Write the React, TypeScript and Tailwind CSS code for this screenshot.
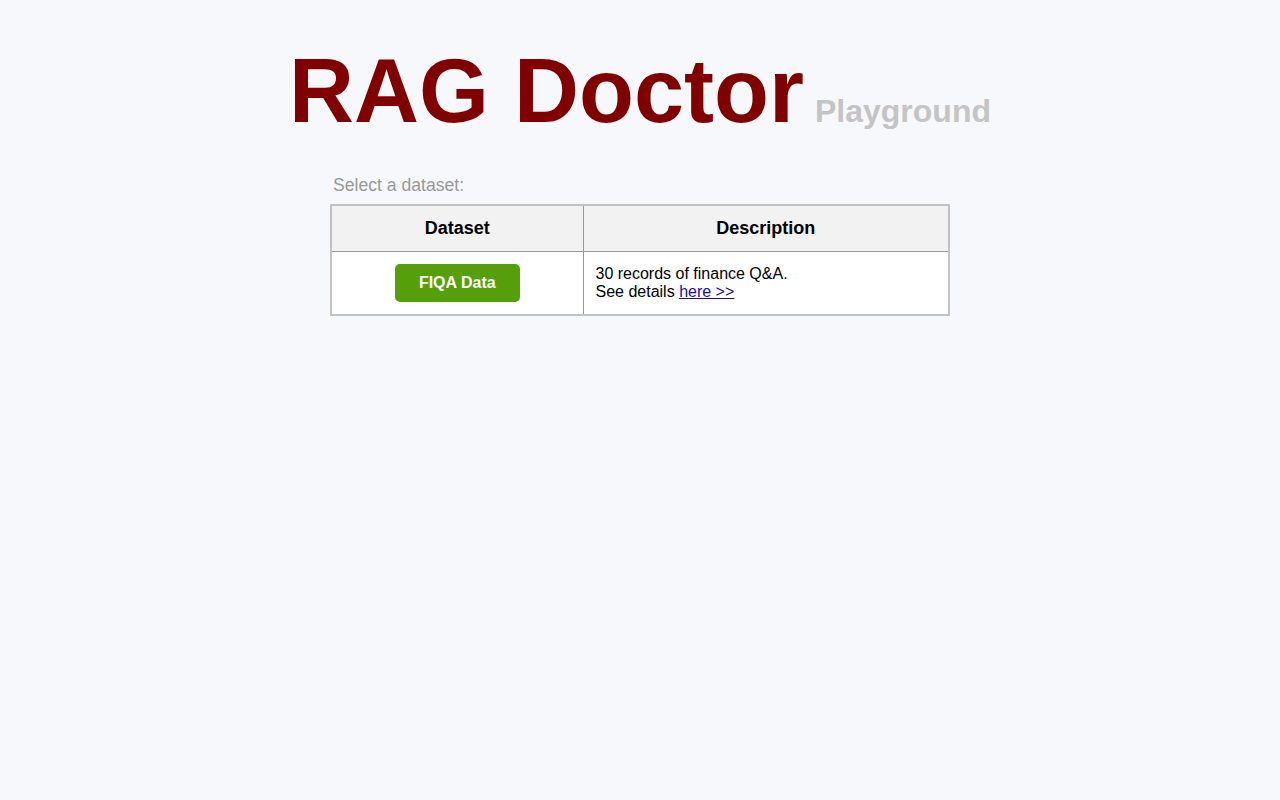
export default function App() {
  return (
    <div className="min-h-screen bg-[#f7f8fc] font-['Liberation_Sans',Arial,sans-serif] text-black">
      {/* Title */}
      <div className="flex items-baseline justify-center pt-[46px]">
        <h1 className="text-[90px] font-bold leading-[90px] text-[#800000]">RAG Doctor</h1>
        <span className="ml-[11px] text-[32px] font-bold text-[#c4c4c4]">Playground</span>
      </div>

      {/* Dataset picker */}
      <div className="mx-auto mt-[36px] w-[620px]">
        <p className="mb-[6px] pl-[3px] text-[17.6px] text-[#999999]">Select a dataset:</p>
        <table className="w-[620px] table-fixed border-collapse border-2 border-[#c2c2c2]">
          <colgroup>
            <col className="w-[252px]" />
            <col />
          </colgroup>
          <thead>
            <tr className="bg-[#f2f2f2]">
              <th className="border border-[#999999] p-[12px] text-center text-[18px] font-bold leading-[21px]">Dataset</th>
              <th className="border border-[#999999] p-[12px] text-center text-[18px] font-bold leading-[21px]">Description</th>
            </tr>
          </thead>
          <tbody>
            <tr className="bg-white">
              <td className="border border-[#999999] p-[12px] text-center align-middle">
                <button className="rounded-[5px] bg-[#559f0a] px-[24px] py-[10px] text-[16px] font-bold leading-[18px] text-white">
                  FIQA Data
                </button>
              </td>
              <td className="border border-[#999999] p-[12px] align-middle text-[16px] leading-[18px]">
                30 records of finance Q&amp;A.
                <br />
                See details{' '}
                <a href="#" className="text-[#1a0dab] underline">
                  here &gt;&gt;
                </a>
              </td>
            </tr>
          </tbody>
        </table>
      </div>
    </div>
  );
}
